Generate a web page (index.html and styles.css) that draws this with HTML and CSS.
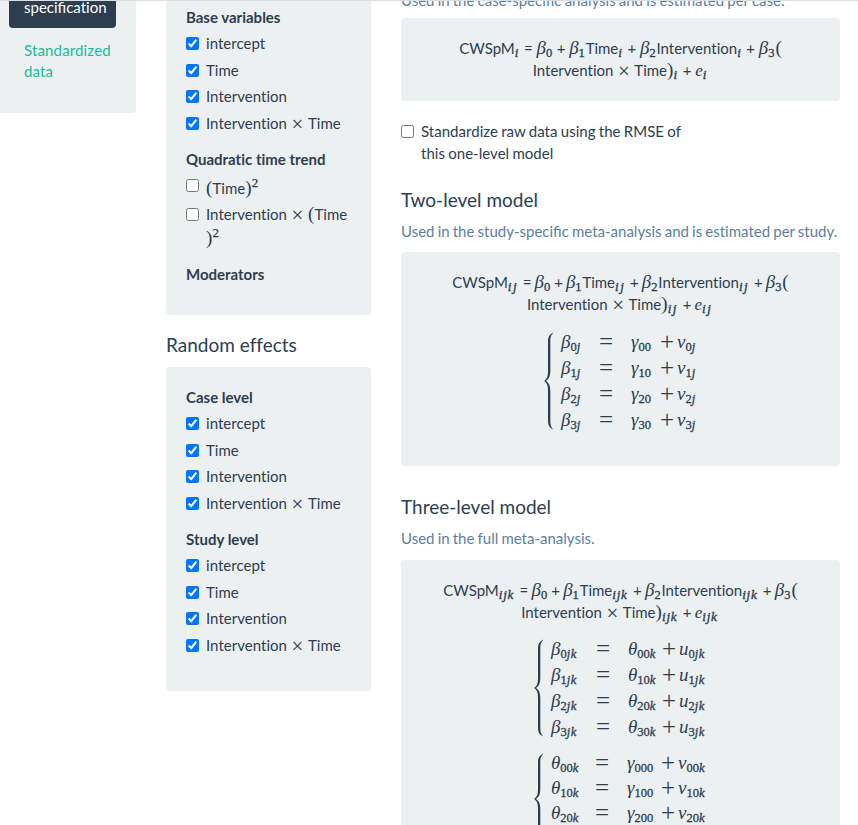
FILE: index.html
```
<!DOCTYPE html>
<html lang="en">
<head>
<meta charset="utf-8">
<title>Model specification</title>
<link rel="stylesheet" href="styles.css">
</head>
<body>
<div class="page">
  <nav class="side">
    <a class="pill active">speci<span class="lig">fi</span>cation</a>
    <a class="pill">Standardized data</a>
  </nav>

  <section class="effects">
    <div class="well first">
      <h5>Base variables</h5>
      <label class="check"><input type="checkbox" checked><span>intercept</span></label>
      <label class="check"><input type="checkbox" checked><span>Time</span></label>
      <label class="check"><input type="checkbox" checked><span>Intervention</span></label>
      <label class="check"><input type="checkbox" checked><span>Intervention<i class="times">×</i>Time</span></label>
      <h5 class="next">Quadratic time trend</h5>
      <label class="check tall"><input type="checkbox"><span><b class="par">(</b>Time<b class="par">)</b><b class="sup">2</b></span></label>
      <label class="check wrap"><input type="checkbox"><span>Intervention<i class="times">×</i><b class="par">(</b>Time<br><b class="par">)</b><b class="sup">2</b></span></label>
      <h5 class="moderators">Moderators</h5>
    </div>
    <h4>Random effects</h4>
    <div class="well">
      <h5>Case level</h5>
      <label class="check"><input type="checkbox" checked><span>intercept</span></label>
      <label class="check"><input type="checkbox" checked><span>Time</span></label>
      <label class="check"><input type="checkbox" checked><span>Intervention</span></label>
      <label class="check"><input type="checkbox" checked><span>Intervention<i class="times">×</i>Time</span></label>
      <h5 class="next">Study level</h5>
      <label class="check"><input type="checkbox" checked><span>intercept</span></label>
      <label class="check"><input type="checkbox" checked><span>Time</span></label>
      <label class="check"><input type="checkbox" checked><span>Intervention</span></label>
      <label class="check"><input type="checkbox" checked><span>Intervention<i class="times">×</i>Time</span></label>
    </div>
  </section>

  <main class="models">
    <p class="help cut">Used in the case-speci<span class="lig">fi</span>c analysis and is estimated per case.</p>
    <div class="well one">
      <div class="eq s1">CWSpM<i class="ix">i</i> = <i class="v beta">β<b>0</b></i> + <i class="v beta">β<b>1</b></i>Time<i class="ix">i</i> + <i class="v beta">β<b>2</b></i>Intervention<i class="ix">i</i> + <i class="v beta">β<b>3</b></i><b class="par">(</b></div>
      <div class="eq s1">Intervention<i class="times">×</i>Time<b class="par">)</b><i class="ix">i</i> + <i class="v e">e</i><i class="ix">i</i></div>
    </div>
    <label class="check standard"><input type="checkbox"><span>Standardize raw data using the RMSE of<br>this one-level model</span></label>

    <h4 class="two-title">Two-level model</h4>
    <p class="help">Used in the study-speci<span class="lig">fi</span>c meta-analysis and is estimated per study.</p>
    <div class="well two">
      <div class="eq s2">CWSpM<i class="ix">ij</i> = <i class="v beta">β<b>0</b></i> + <i class="v beta">β<b>1</b></i>Time<i class="ix">ij</i> + <i class="v beta">β<b>2</b></i>Intervention<i class="ix">ij</i> + <i class="v beta">β<b>3</b></i><b class="par">(</b></div>
      <div class="eq s2">Intervention<i class="times">×</i>Time<b class="par">)</b><i class="ix">ij</i> + <i class="v e">e</i><i class="ix">ij</i></div>
      <div class="system sys-a">
        <svg class="brace" width="10" height="98" viewBox="0 0 10 98"><path d="M9.500 .4C5 2.500 4 5 4 10V38C4 44 3.500 46.500 .2 49C3.500 51.500 4 54 4 60V88C4 93 5 95.500 9.500 97.600C7 95 6.300 93 6.300 88V60C6.300 53.500 5 51 2 49C5 47 6.300 44.500 6.300 38V10C6.300 5 7 3 9.500 .4Z"/></svg>
        <div class="rows">
          <div class="row"><i class="v">β<b>0</b><b class="si">j</b></i><span class="op eqs">=</span><i class="v">γ<b>00</b></i><span class="op">+</span><i class="v">v<b>0</b><b class="si">j</b></i></div>
          <div class="row"><i class="v">β<b>1</b><b class="si">j</b></i><span class="op eqs">=</span><i class="v">γ<b>10</b></i><span class="op">+</span><i class="v">v<b>1</b><b class="si">j</b></i></div>
          <div class="row"><i class="v">β<b>2</b><b class="si">j</b></i><span class="op eqs">=</span><i class="v">γ<b>20</b></i><span class="op">+</span><i class="v">v<b>2</b><b class="si">j</b></i></div>
          <div class="row"><i class="v">β<b>3</b><b class="si">j</b></i><span class="op eqs">=</span><i class="v">γ<b>30</b></i><span class="op">+</span><i class="v">v<b>3</b><b class="si">j</b></i></div>
        </div>
      </div>
    </div>

    <h4 class="three-title">Three-level model</h4>
    <p class="help">Used in the full meta-analysis.</p>
    <div class="well three">
      <div class="eq s3">CWSpM<i class="ix">ijk</i> = <i class="v beta">β<b>0</b></i> + <i class="v beta">β<b>1</b></i>Time<i class="ix">ijk</i> + <i class="v beta">β<b>2</b></i>Intervention<i class="ix">ijk</i> + <i class="v beta">β<b>3</b></i><b class="par">(</b></div>
      <div class="eq s3">Intervention<i class="times">×</i>Time<b class="par">)</b><i class="ix">ijk</i> + <i class="v e">e</i><i class="ix">ijk</i></div>
      <div class="system sys-b">
        <svg class="brace" width="10" height="98" viewBox="0 0 10 98"><path d="M9.500 .4C5 2.500 4 5 4 10V38C4 44 3.500 46.500 .2 49C3.500 51.500 4 54 4 60V88C4 93 5 95.500 9.500 97.600C7 95 6.300 93 6.300 88V60C6.300 53.500 5 51 2 49C5 47 6.300 44.500 6.300 38V10C6.300 5 7 3 9.500 .4Z"/></svg>
        <div class="rows">
          <div class="row"><i class="v">β<b>0</b><b class="si">jk</b></i><span class="op eqs">=</span><i class="v">θ<b>00</b><b class="si">k</b></i><span class="op">+</span><i class="v">u<b>0</b><b class="si">jk</b></i></div>
          <div class="row"><i class="v">β<b>1</b><b class="si">jk</b></i><span class="op eqs">=</span><i class="v">θ<b>10</b><b class="si">k</b></i><span class="op">+</span><i class="v">u<b>1</b><b class="si">jk</b></i></div>
          <div class="row"><i class="v">β<b>2</b><b class="si">jk</b></i><span class="op eqs">=</span><i class="v">θ<b>20</b><b class="si">k</b></i><span class="op">+</span><i class="v">u<b>2</b><b class="si">jk</b></i></div>
          <div class="row"><i class="v">β<b>3</b><b class="si">jk</b></i><span class="op eqs">=</span><i class="v">θ<b>30</b><b class="si">k</b></i><span class="op">+</span><i class="v">u<b>3</b><b class="si">jk</b></i></div>
        </div>
      </div>
      <div class="system sys-c">
        <svg class="brace" width="10" height="98" viewBox="0 0 10 98"><path d="M9.500 .4C5 2.500 4 5 4 10V35C4 41 3.500 43.500 .2 46C3.500 48.500 4 51 4 57V88C4 93 5 95.500 9.500 97.600C7 95 6.300 93 6.300 88V57C6.300 50.500 5 48 2 46C5 44 6.300 41.500 6.300 35V10C6.300 5 7 3 9.500 .4Z"/></svg>
        <div class="rows">
          <div class="row"><i class="v">θ<b>00</b><b class="si">k</b></i><span class="op eqs">=</span><i class="v">γ<b>000</b></i><span class="op">+</span><i class="v">v<b>00</b><b class="si">k</b></i></div>
          <div class="row"><i class="v">θ<b>10</b><b class="si">k</b></i><span class="op eqs">=</span><i class="v">γ<b>100</b></i><span class="op">+</span><i class="v">v<b>10</b><b class="si">k</b></i></div>
          <div class="row"><i class="v">θ<b>20</b><b class="si">k</b></i><span class="op eqs">=</span><i class="v">γ<b>200</b></i><span class="op">+</span><i class="v">v<b>20</b><b class="si">k</b></i></div>
        </div>
      </div>
    </div>
  </main>
</div>
</body>
</html>
```
FILE: styles.css
```
* { box-sizing: border-box; }
html, body { height: 100%; }
body {
  margin: 0;
  overflow: hidden;
  background: #fff;
  color: #2c3e50;
  font: 15px/21.43px Lato, "Open Sans", sans-serif;
  font-variant-ligatures: none;
}
.lig { font-variant-ligatures: normal; }
.page {
  display: flex;
  align-items: flex-start;
  height: 825px;
  overflow: hidden;
  border-top: 1px solid #dcdfe0;
}
h4, h5, p { margin: 0; }
h4 { font-size: 19px; font-weight: 400; line-height: 21px; }
h5 { font-size: 15px; font-weight: 700; line-height: 21.43px; }
.well { background: #ecf0f1; border-radius: 4px; padding: 20px; }

.side {
  width: 136px;
  height: 112px;
  padding-left: 9px;
  background: #ecf0f1;
  border-radius: 0 0 4px 0;
}
.pill { display: block; width: 107px; padding: 10px 15px; color: #18bc9c; letter-spacing: .15px; }
.pill.active {
  height: 27px;
  padding: 0 15px;
  line-height: 12px;
  margin-bottom: 2px;
  background: #2c3e50;
  color: #fff;
  letter-spacing: 0;
  border-radius: 0 0 4px 4px;
}

.effects { width: 205px; margin-left: 30px; }
.effects .first { height: 314px; padding-top: 5.8px; border-radius: 0 0 4px 4px; }
.effects h4 { margin: 19px 0 12px; }
.effects .well:last-child { height: 324px; padding-top: 19.8px; }
.next { margin-top: 15px; }
.check { display: flex; margin-top: 5px; white-space: nowrap; letter-spacing: .03px; }
.check input { width: 13px; height: 13px; margin: 4px 7px 0 0; flex: none; accent-color: #0075ff; }
.tall { height: 23.5px; }
.tall span { padding-top: 2.5px; }
.wrap { height: 46px; }
.wrap span { line-height: 24px; margin-top: -1.5px; }
.moderators { margin-top: 14.5px; }

.times, .par, .sup, .ix, .v, .v b, .op {
  font-family: "Liberation Serif", serif;
  font-weight: 400;
  line-height: 0;
}
.times { display: inline-block; width: 21px; text-align: center; font-size: 21px; font-style: normal; vertical-align: -2px; }
.par { display: inline-block; width: 6.5px; font-size: 19px; }
.sup { font-size: 13px; vertical-align: 7px; -webkit-text-stroke: .25px; }

.models { width: 439px; margin-left: 30px; }
.help { color: #5d7f9d; white-space: nowrap; word-spacing: -.7px; }
.cut { height: 17px; line-height: 0; margin-top: -1px; margin-bottom: 1px; }
.one { height: 83px; }
.models .well { padding-top: 19px; }
.eq { height: 22px; line-height: 22px; text-align: center; white-space: nowrap; }
.ix { display: inline-block; font-size: 13px; vertical-align: -3px; -webkit-text-stroke: .35px; text-align: left; }
.s1 { word-spacing: -.1px; }
.s2 { word-spacing: -.8px; }
.s3 { word-spacing: -.6px; }
.s1 .ix { width: 5.5px; }
.s2 .ix { width: 12px; letter-spacing: 1.5px; }
.s3 .ix { width: 17.5px; letter-spacing: .8px; }
.v { font-size: 19px; }
.v b { font-size: 12.5px; font-style: normal; vertical-align: -3px; -webkit-text-stroke: .3px; }
.v .si { font-style: italic; letter-spacing: .5px; }
.beta { display: inline-block; width: 16.5px; text-align: left; }
.e { font-size: 17px; }
.standard { margin-top: 20px; line-height: 22px; word-spacing: -.6px; }
.standard span { margin-top: -1px; margin-bottom: 1px; }
.two-title { margin: 24px 0 10.5px; }
.two { height: 214px; margin-top: 10px; }
.three-title { margin: 30px 0 11px; }
.three { height: 265px; margin-top: 10.5px; padding-bottom: 0; border-radius: 4px 4px 0 0; }

.system { display: flex; }
.brace { fill: #2c3e50; flex: none; }
.row { display: grid; height: 26px; align-items: center; }
.row .v { line-height: 26px; white-space: nowrap; }
.op { font-size: 25px; text-align: center; line-height: 24px; padding-top: 1px; }
.eqs { text-align: left; }
.sys-a { margin: 17px 0 0 123px; }
.sys-b { margin: 16px 0 0 113px; }
.sys-c { margin: 13px 0 0 113px; }
.rows { margin-left: 7px; margin-top: -3px; }
.sys-a .row { grid-template-columns: 38px 32px 26px 20px 24px; }
.sys-b .row { grid-template-columns: 45px 32px 31px 20px 32px; }
.sys-c .row { grid-template-columns: 44px 32px 31px 20px 32px; height: 25px; }
```
